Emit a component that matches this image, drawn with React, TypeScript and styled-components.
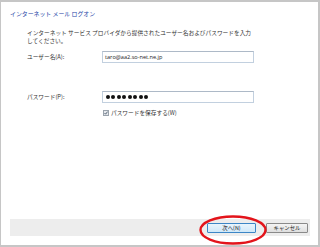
import React from "react";
import styled, { createGlobalStyle } from "styled-components";

const Global = createGlobalStyle`
  html, body { margin: 0; padding: 0; background: #ffffff; }
  body { font-family: "Noto Sans CJK JP", "Noto Sans", sans-serif; }
`;

const Frame = styled.div`
  position: relative;
  width: 320px;
  height: 247px;
  box-sizing: border-box;
  border-style: solid;
  border-color: #c6c6c6;
  border-width: 2px 2px 2px 1px;
  background: #ffffff;
  display: flex;
  flex-direction: column;
  font-family: "Noto Sans CJK JP", sans-serif;
  font-size: 5.7px;
  line-height: 8px;
  color: #2b2b2b;
`;

const Title = styled.div`
  padding: 8px 0 0 9px;
  color: #1c3fa6;
  font-size: 5.9px;
  line-height: 8px;
`;

const Description = styled.p`
  margin: 11px 0 0 26px;
  line-height: 8px;
  color: #333333;
`;

const Form = styled.div`
  margin: 6px 0 0 26px;
  display: grid;
  grid-template-columns: 75px 152px;
  row-gap: 0;
  align-items: center;
`;

const Label = styled.div<{ $top?: number }>`
  margin-top: ${(p) => p.$top ?? 0}px;
  color: #333333;
`;

const Field = styled.div<{ $top?: number }>`
  margin-top: ${(p) => p.$top ?? 0}px;
  box-sizing: border-box;
  height: 12px;
  border: 1px solid #c2d0df;
  border-top-color: #adb9c7;
  background: #ffffff;
  padding-left: 2px;
  display: flex;
  align-items: center;
  font-family: "Open Sans", "Noto Sans", sans-serif;
  font-size: 5.6px;
  color: #222222;
`;

const Dots = styled.div`
  display: flex;
  gap: 1.45px;
  padding-left: 1px;
`;

const Dot = styled.span`
  width: 4px;
  height: 4px;
  border-radius: 50%;
  background: #111111;
`;

const CheckRow = styled.div`
  grid-column: 2;
  margin-top: 6px;
  display: flex;
  align-items: center;
  gap: 2px;
  color: #333333;
  padding-left: 1px;
`;

const CheckBox = styled.span`
  width: 6px;
  height: 6px;
  box-sizing: border-box;
  border: 1px solid #9aa3ad;
  background: #e6e9ee;
  display: flex;
  align-items: center;
  justify-content: center;
`;

const Footer = styled.div`
  margin: auto 8px 9px 9px;
  height: 17px;
  background: #ededed;
  display: flex;
  align-items: center;
  justify-content: flex-end;
  gap: 10px;
  padding-right: 2px;
`;

const Button = styled.div<{ $primary?: boolean }>`
  box-sizing: border-box;
  width: ${(p) => (p.$primary ? 49 : 42)}px;
  height: 10px;
  border: 1px solid ${(p) => (p.$primary ? "#3c86c6" : "#8a8a8a")};
  border-radius: 1px;
  background: ${(p) =>
    p.$primary
      ? "linear-gradient(#e9f5fd, #cfe8f9)"
      : "linear-gradient(#f4f4f4, #dedede)"};
  display: flex;
  align-items: center;
  justify-content: center;
  font-size: 5.4px;
  line-height: 8px;
  color: #222222;
`;

const Highlight = styled.svg`
  position: absolute;
  left: 198px;
  top: 212px;
  width: 70px;
  height: 32px;
  pointer-events: none;
`;

export default function App() {
  return (
    <>
      <Global />
      <Frame>
        <Title>インターネット メール ログオン</Title>
        <Description>
          インターネット サービス プロバイダから提供されたユーザー名およびパスワードを入力
          <br />
          してください。
        </Description>
        <Form>
          <Label>ユーザー名(A):</Label>
          <Field>taro@aa2.so-net.ne.jp</Field>
          <Label $top={28}>パスワード(P):</Label>
          <Field $top={28}>
            <Dots>
              {Array.from({ length: 8 }).map((_, i) => (
                <Dot key={i} />
              ))}
            </Dots>
          </Field>
          <CheckRow>
            <CheckBox>
              <svg width="4" height="4" viewBox="0 0 4 4">
                <path d="M0.5 2 L1.6 3.2 L3.6 0.6" fill="none" stroke="#3a4a5a" strokeWidth="0.8" />
              </svg>
            </CheckBox>
            パスワードを保存する(W)
          </CheckRow>
        </Form>
        <Footer>
          <Button $primary>次へ(N)</Button>
          <Button>キャンセル</Button>
        </Footer>
        <Highlight viewBox="0 0 70 32">
          <ellipse cx="34" cy="16" rx="32.5" ry="13.5" fill="none" stroke="#e3141b" strokeWidth="2.4" />
        </Highlight>
      </Frame>
    </>
  );
}
